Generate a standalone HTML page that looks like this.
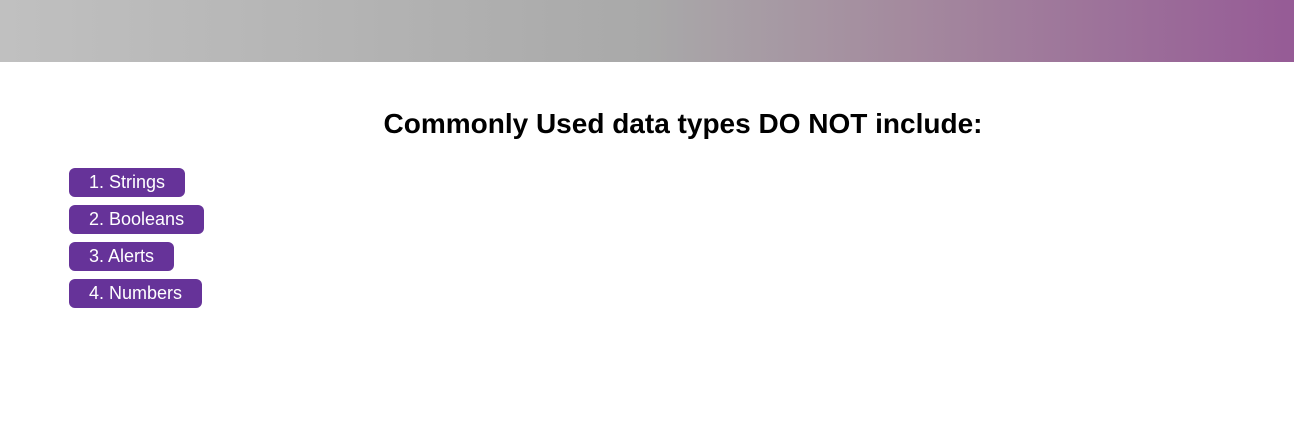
<!DOCTYPE html>
<html><head><style>
body{margin:0;width:1294px;height:440px;background:#fff;font-family:"Liberation Sans",sans-serif;overflow:hidden}
.hdr{height:62px;background:linear-gradient(to right,#c0c0c0 0%,#a9a9a9 50%,#a48a9e 70%,#965b96 100%)}
h1{margin:0;position:absolute;top:108px;left:0;width:1366px;text-align:center;font-size:28px;font-weight:bold;color:#000;line-height:32px}
.b{position:absolute;left:69px;height:29px;line-height:29px;background:#663399;color:#fff;font-size:18px;border-radius:6px;padding:0 0 0 20px;box-sizing:border-box;white-space:nowrap}
</style></head><body>
<div class="hdr"></div>
<h1>Commonly Used data types DO NOT include:</h1>
<div class="b" style="top:168px;width:116px">1. Strings</div>
<div class="b" style="top:205px;width:135px">2. Booleans</div>
<div class="b" style="top:242px;width:105px">3. Alerts</div>
<div class="b" style="top:279px;width:133px">4. Numbers</div>
</body></html>
